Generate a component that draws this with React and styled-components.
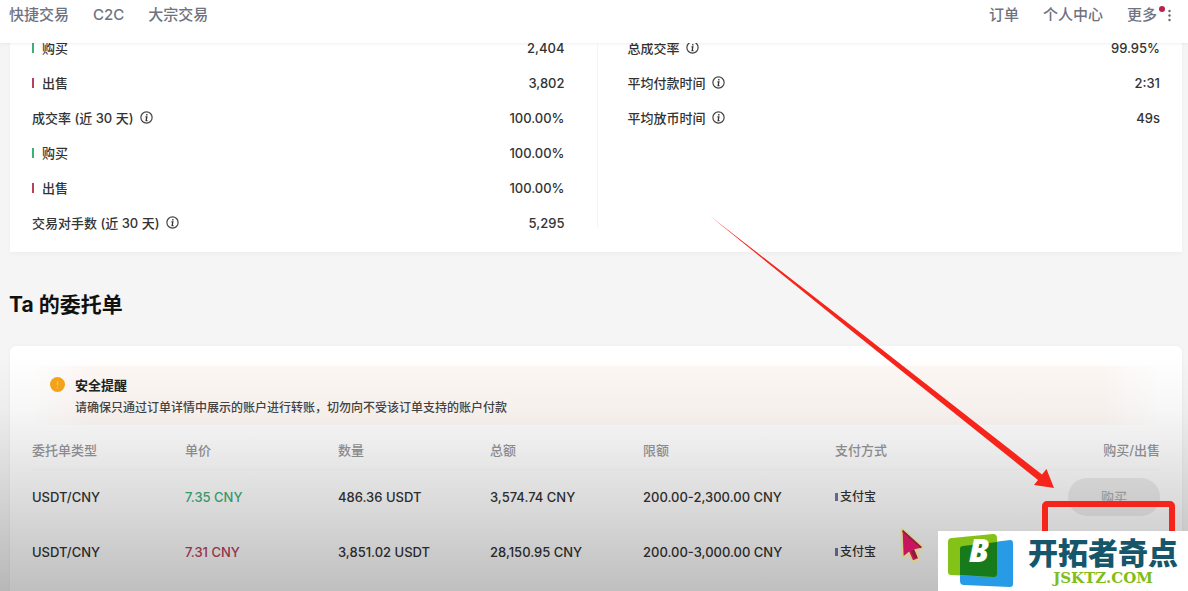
import React from "react";
import styled, { createGlobalStyle } from "styled-components";

const tradeStats = [
  { label: "购买", value: "2,404", side: "buy" },
  { label: "出售", value: "3,802", side: "sell" },
  { label: "成交率 (近 30 天)", value: "100.00%", info: true },
  { label: "购买", value: "100.00%", side: "buy" },
  { label: "出售", value: "100.00%", side: "sell" },
  { label: "交易对手数 (近 30 天)", value: "5,295", info: true },
];

const timeStats = [
  { label: "总成交率", value: "99.95%", info: true },
  { label: "平均付款时间", value: "2:31", info: true },
  { label: "平均放币时间", value: "49s", info: true },
];

const orders = [
  {
    pair: "USDT/CNY",
    side: "buy",
    price: "7.35 CNY",
    amount: "486.36 USDT",
    total: "3,574.74 CNY",
    limit: "200.00-2,300.00 CNY",
    payment: "支付宝",
  },
  {
    pair: "USDT/CNY",
    side: "sell",
    price: "7.31 CNY",
    amount: "3,851.02 USDT",
    total: "28,150.95 CNY",
    limit: "200.00-3,000.00 CNY",
    payment: "支付宝",
  },
];

function InfoIcon() {
  return (
    <svg width="13" height="13" viewBox="0 0 12 12" fill="none" aria-hidden="true">
      <circle cx="6" cy="6" r="5.2" stroke="#444" strokeWidth="1.1" />
      <path d="M6.3 2.800v1.400M5 5.500h1.300L5.700 8.900h1.200" stroke="#333" strokeWidth="1.2" />
    </svg>
  );
}

function StatList({ stats }) {
  return (
    <Stats>
      {stats.map((stat, i) => (
        <StatRow key={i}>
          <StatLabel>
            {stat.side && <SideMark $side={stat.side} />}
            {stat.label}
            {stat.info && <InfoIcon />}
          </StatLabel>
          <span>{stat.value}</span>
        </StatRow>
      ))}
    </Stats>
  );
}

function Arrow() {
  return (
    <ArrowSvg width="346" height="275" viewBox="0 0 346 275" aria-hidden="true">
      <path
        d="M1 1 L148 115 L333 259.500 L337.500 254 L345 273 L325 270 L329 265 L144 117 Z"
        fill="#f6251b"
      />
    </ArrowSvg>
  );
}

function Cursor() {
  return (
    <CursorSvg width="31" height="42" viewBox="0 0 28 38" aria-hidden="true">
      <path
        d="M5 5 L22 20.500 L15.500 22 L19 30 L14.500 32 L11 24 L6 28 Z"
        fill="#c9155f"
        stroke="#d6cf8c"
        strokeWidth="4"
        strokeLinejoin="round"
        paintOrder="stroke"
      />
      <path d="M5 5 L22 20.500" stroke="#8c1f33" strokeWidth="1.500" />
      <path d="M14 23 L17 30" stroke="#8c1f33" strokeWidth="3" />
    </CursorSvg>
  );
}

function Logo() {
  return (
    <LogoSvg width="66" height="56" viewBox="0 0 66 56" aria-hidden="true">
      <path d="M15 13 L62 7 Q65 7 65 10 V51 Q65 54 62 54 L16 52 Q12 52 12 48 V16 Q12 13 15 13Z" fill="#279be5" />
      <path d="M4 5 L45 1 Q49 1 49 5 V41 Q49 44 46 44 L3 42 Q0 42 0 39 V9 Q0 5 4 5Z" fill="#85c217" />
      <path d="M15 13 L49 9 V41 Q49 44 46 44 L12 42 V16 Q12 13 15 13Z" fill="#177b1b" />
      <text
        x="31"
        y="29"
        textAnchor="middle"
        fontFamily="Open Sans, sans-serif"
        fontSize="32"
        fontWeight="800"
        fontStyle="italic"
        fill="#fff"
      >
        B
      </text>
    </LogoSvg>
  );
}

export default function App() {
  return (
    <Page>
      <GlobalStyle />
      <Header>
        <Nav>
          <a href="#express">快捷交易</a>
          <a href="#c2c">C2C</a>
          <a href="#block">大宗交易</a>
        </Nav>
        <Nav>
          <a href="#orders">订单</a>
          <a href="#profile">个人中心</a>
          <MoreLink href="#more">
            更多
            <RedDot />
            <svg width="3" height="13" viewBox="0 0 3 13" fill="#667" aria-hidden="true">
              <circle cx="1.500" cy="2" r="1.200" />
              <circle cx="1.500" cy="6.500" r="1.200" />
              <circle cx="1.500" cy="11" r="1.200" />
            </svg>
          </MoreLink>
        </Nav>
      </Header>

      <StatsCard>
        <StatList stats={tradeStats} />
        <Divider />
        <StatList stats={timeStats} />
      </StatsCard>

      <Title>Ta 的委托单</Title>

      <OrdersCard>
        <Notice>
          <NoticeIcon viewBox="0 0 15 15" aria-hidden="true">
            <circle cx="7.500" cy="7.500" r="7.500" fill="#f7a51b" />
            <path d="M7.500 4v4.500M7.500 10v1.200" stroke="#fdc65c" strokeWidth="1.300" />
          </NoticeIcon>
          <div>
            <NoticeTitle>安全提醒</NoticeTitle>
            <NoticeText>
              请确保只通过订单详情中展示的账户进行转账，切勿向不受该订单支持的账户付款
            </NoticeText>
          </div>
        </Notice>
        <Table>
          <colgroup>
            <Col $share={153} />
            <Col $share={153} />
            <Col $share={152} />
            <Col $share={153} />
            <Col $share={192} />
            <Col $share={160} />
            <Col $share={165} />
          </colgroup>
          <thead>
            <tr>
              <th>委托单类型</th>
              <th>单价</th>
              <th>数量</th>
              <th>总额</th>
              <th>限额</th>
              <th>支付方式</th>
              <th>购买/出售</th>
            </tr>
          </thead>
          <tbody>
            {orders.map((order) => (
              <tr key={order.price}>
                <td>{order.pair}</td>
                <Price $side={order.side}>{order.price}</Price>
                <td>{order.amount}</td>
                <td>{order.total}</td>
                <td>{order.limit}</td>
                <td>
                  <Payment>{order.payment}</Payment>
                </td>
                <td>{order.side === "buy" && <BuyButton type="button">购买</BuyButton>}</td>
              </tr>
            ))}
          </tbody>
        </Table>
      </OrdersCard>

      <Shade />
      <Highlight />
      <Arrow />
      <Cursor />
      <Watermark>
        <Logo />
        <Brand>
          <BrandName>开拓者奇点</BrandName>
          <BrandUrl>JSKTZ.COM</BrandUrl>
        </Brand>
      </Watermark>
    </Page>
  );
}

const colors = {
  buy: "#3db07a",
  sell: "#b8405c",
};

const GlobalStyle = createGlobalStyle`
  * {
    box-sizing: border-box;
  }
  body {
    margin: 0;
    color: #333;
    font-family: Inter, "Noto Sans CJK SC", sans-serif;
    font-size: 13px;
    font-weight: 500;
    line-height: 20px;
    background: #f5f5f5;
  }
  a {
    color: inherit;
    text-decoration: none;
  }
`;

const Page = styled.div`
  position: relative;
  height: 100vh;
  overflow: hidden;
`;

const Header = styled.header`
  position: relative;
  z-index: 1;
  display: flex;
  justify-content: space-between;
  padding: 5px 17px 18px 9px;
  color: #70737f;
  font-size: 15px;
  background: #fff;
  box-shadow: 0 1px 3px rgba(0, 0, 0, 0.06);
`;

const Nav = styled.nav`
  display: flex;
  gap: 24px;
`;

const MoreLink = styled.a`
  position: relative;
  display: flex;
  align-items: center;
  gap: 11px;
`;

const RedDot = styled.span`
  position: absolute;
  top: 1px;
  right: 6px;
  width: 6px;
  height: 6px;
  border-radius: 50%;
  background: #b82445;
`;

/* scrolled part of the way under the header */
const StatsCard = styled.section`
  display: flex;
  align-items: stretch;
  margin: -13px 6px 0 10px;
  padding: 0 22px 12px;
  background: #fff;
  box-shadow: 0 2px 4px rgba(0, 0, 0, 0.03);
`;

const Stats = styled.div`
  flex: 1;
`;

const Divider = styled.div`
  width: 1px;
  margin: 0 30px 12px 32px;
  background: #f5f5f5;
`;

const StatRow = styled.div`
  display: flex;
  align-items: center;
  justify-content: space-between;
  height: 35px;
`;

const StatLabel = styled.div`
  display: flex;
  align-items: center;
  gap: 6px;
`;

const SideMark = styled.span`
  width: 2px;
  height: 10px;
  margin-right: 2px;
  background: ${({ $side }) => colors[$side]};
`;

const Title = styled.h1`
  margin: 39px 9px 27px;
  color: #111;
  font-size: 21px;
  font-weight: 700;
  line-height: 28px;
`;

const OrdersCard = styled.section`
  margin: 0 6px 0 10px;
  padding: 20px 22px 60px;
  border-radius: 6px;
  background: #fff;
  box-shadow: 0 0 4px rgba(0, 0, 0, 0.04);
`;

const Notice = styled.div`
  display: flex;
  gap: 10px;
  padding: 9px 18px 7px;
  border-radius: 8px;
  background: linear-gradient(90deg, #fff, #fef8f5 5%, #fef8f5 95%, #fff);
`;

const NoticeIcon = styled.svg`
  width: 15px;
  height: 15px;
  margin-top: 2px;
`;

const NoticeTitle = styled.div`
  color: #222;
  font-weight: 700;
`;

const NoticeText = styled.div`
  margin-top: 3px;
  color: #444;
  font-size: 12px;
`;

const Table = styled.table`
  width: 100%;
  margin-top: 7px;
  border-collapse: collapse;
  table-layout: fixed;
  text-align: left;
  white-space: nowrap;
  th,
  td {
    padding: 0;
  }
  th {
    height: 37px;
    color: #96969b;
    font-weight: 500;
    border-bottom: 1px solid #f8f8f8;
  }
  td {
    height: 55px;
  }
  th:last-child,
  td:last-child {
    text-align: right;
  }
`;

const Col = styled.col`
  width: ${({ $share }) => ($share / 1128) * 100}%;
`;

const Price = styled.td`
  color: ${({ $side }) => colors[$side]};
`;

const Payment = styled.span`
  display: flex;
  align-items: center;
  gap: 2px;
  font-size: 12px;
  &::before {
    content: "";
    width: 3px;
    height: 8px;
    background: #7474ac;
  }
`;

const BuyButton = styled.button`
  width: 92px;
  height: 38px;
  border: 0;
  border-radius: 19px;
  color: #b0b0b0;
  font: inherit;
  background: #eeeeee;
`;

const Shade = styled.div`
  position: absolute;
  inset: 0;
  pointer-events: none;
  background: linear-gradient(
    transparent 60%,
    rgba(0, 0, 0, 0.03) 69%,
    rgba(0, 0, 0, 0.08) 76%,
    rgba(0, 0, 0, 0.15) 86%,
    rgba(0, 0, 0, 0.25) 100%
  );
`;

const Highlight = styled.div`
  position: absolute;
  top: 501px;
  right: 13px;
  width: 133px;
  height: 60px;
  border: 6px solid #f6251b;
  border-radius: 5px;
`;

const ArrowSvg = styled.svg`
  position: absolute;
  top: 215px;
  right: 133px;
`;

const CursorSvg = styled.svg`
  position: absolute;
  top: 525px;
  right: 260px;
`;

const LogoSvg = styled.svg`
  overflow: visible;
`;

const Watermark = styled.div`
  position: absolute;
  right: 0;
  bottom: 0;
  display: flex;
  align-items: center;
  gap: 14px;
  padding: 2px 10px;
  background: #fff;
`;

const Brand = styled.div`
  display: flex;
  flex-direction: column;
  align-items: center;
`;

const BrandName = styled.div`
  color: #16566a;
  font-size: 30px;
  font-weight: 900;
  line-height: 34px;
`;

const BrandUrl = styled.div`
  color: #80bd1a;
  font-family: "DejaVu Serif", serif;
  font-size: 15px;
  font-weight: 700;
  line-height: 16px;
`;
